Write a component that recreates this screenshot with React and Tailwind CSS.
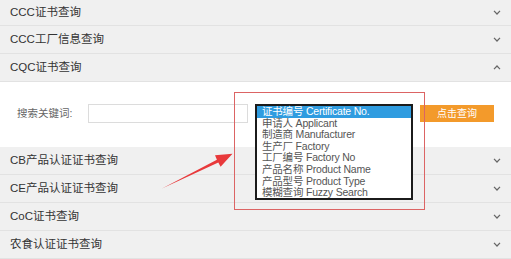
import React from "react";

const font = { fontFamily: '"Liberation Sans", "Noto Sans CJK SC", sans-serif' };

const topRows = ["CCC证书查询", "CCC工厂信息查询"];
const bottomRows = ["CB产品认证证书查询", "CE产品认证证书查询", "CoC证书查询", "农食认证证书查询"];

const options = [
  "证书编号 Certificate No.",
  "申请人 Applicant",
  "制造商 Manufacturer",
  "生产厂 Factory",
  "工厂编号 Factory No",
  "产品名称 Product Name",
  "产品型号 Product Type",
  "模糊查询 Fuzzy Search",
];

function Chevron({ up }) {
  return (
    <svg width="8" height="5" viewBox="0 0 8 5" className="shrink-0">
      <polyline
        points={up ? "1,4.2 4,1 7,4.2" : "1,0.8 4,4 7,0.8"}
        fill="none"
        stroke="#666"
        strokeWidth="1.2"
      />
    </svg>
  );
}

function Row({ title, up, first }) {
  return (
    <div
      className={`flex items-center justify-between bg-[#f0f0f0] border-b border-[#e2e2e2] pl-[10px] pr-[10px] ${
        first ? "h-[26px]" : "h-[28px]"
      }`}
    >
      <span className="text-[11.5px] text-[#333]">{title}</span>
      <Chevron up={up} />
    </div>
  );
}

export default function App() {
  return (
    <div className="relative w-[511px] h-[259px] overflow-hidden bg-white" style={font}>
      <Row title={topRows[0]} first />
      <Row title={topRows[1]} />
      <Row title="CQC证书查询" up />

      <div className="h-[65px] bg-white pt-[22px]">
        <div className="flex items-center h-[19px]">
          <span className="pl-[17px] w-[88px] text-[10.5px] text-[#666]">搜索关键词:</span>
          <div className="w-[160px] h-[19px] border border-[#dcdcdc] bg-white" />
          <div className="relative ml-[7px] w-[158px] h-[19px]">
            <div className="absolute left-0 top-0 w-[158px] h-[96px] border-2 border-[#1b1b1b] bg-white z-10">
              {options.map((o, i) => (
                <div
                  key={o}
                  className={`h-[11.6px] leading-[11.6px] pl-[5px] text-[10.5px] tracking-[-0.2px] whitespace-nowrap ${
                    i === 0 ? "bg-[#2f9ce0] text-white" : "text-[#555]"
                  }`}
                >
                  {o}
                </div>
              ))}
            </div>
          </div>
          <button className="ml-[7px] w-[74px] h-[17px] bg-[#f39a2b] text-white text-[10px] leading-[17px] text-center">
            点击查询
          </button>
        </div>
      </div>

      {bottomRows.map((t) => (
        <Row key={t} title={t} />
      ))}

      <div className="absolute left-[234px] top-[92px] w-[191px] h-[118px] border border-[#dc6464] z-20 pointer-events-none" />

      <svg className="absolute left-0 top-0 z-20 pointer-events-none" width="511" height="259">
        <polygon
          points="162,188.5 216.9,159.7 215,155.2 232.5,153.8 220.6,166.8 218.3,162.6"
          fill="#e8393b"
        />
      </svg>
    </div>
  );
}
